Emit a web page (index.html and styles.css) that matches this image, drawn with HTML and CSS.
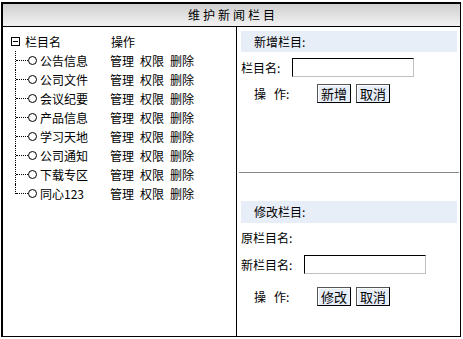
FILE: index.html
```html
<!DOCTYPE html>
<html lang="zh-CN">

<head>
    <meta charset="UTF-8">
    <meta name="viewport" content="width=device-width, initial-scale=1.0">
    <title>维护新闻栏目</title>
    <link rel="stylesheet" href="styles.css">
</head>

<body>
    <div class="frame">
        <div class="title">维护新闻栏目</div>
        <div class="main">
            <div class="tree">
                <div class="tree-head">
                    <span class="fold"></span>
                    <span class="head-name">栏目名</span>
                    <span class="ops">操作</span>
                </div>
                <ul class="nodes">
                    <li class="node"><span class="branch"></span><span class="dot"></span><span class="name">公告信息</span><span class="ops"><a>管理</a><a>权限</a><a>删除</a></span></li>
                    <li class="node"><span class="branch"></span><span class="dot"></span><span class="name">公司文件</span><span class="ops"><a>管理</a><a>权限</a><a>删除</a></span></li>
                    <li class="node"><span class="branch"></span><span class="dot"></span><span class="name">会议纪要</span><span class="ops"><a>管理</a><a>权限</a><a>删除</a></span></li>
                    <li class="node"><span class="branch"></span><span class="dot"></span><span class="name">产品信息</span><span class="ops"><a>管理</a><a>权限</a><a>删除</a></span></li>
                    <li class="node"><span class="branch"></span><span class="dot"></span><span class="name">学习天地</span><span class="ops"><a>管理</a><a>权限</a><a>删除</a></span></li>
                    <li class="node"><span class="branch"></span><span class="dot"></span><span class="name">公司通知</span><span class="ops"><a>管理</a><a>权限</a><a>删除</a></span></li>
                    <li class="node"><span class="branch"></span><span class="dot"></span><span class="name">下载专区</span><span class="ops"><a>管理</a><a>权限</a><a>删除</a></span></li>
                    <li class="node"><span class="branch last"></span><span class="dot"></span><span class="name">同心123</span><span class="ops"><a>管理</a><a>权限</a><a>删除</a></span></li>
                </ul>
            </div>

            <div class="forms">
                <div class="box box-add">
                    <div class="strip">新增栏目:</div>
                    <div class="row row-name">
                        <label>栏目名:</label>
                        <input type="text" class="field field-short">
                    </div>
                    <div class="row row-act">
                        <span class="act-label">操&nbsp;&nbsp;&nbsp;作:</span>
                        <button class="btn">新增</button>
                        <button class="btn">取消</button>
                    </div>
                </div>

                <hr class="split">

                <div class="box box-edit">
                    <div class="strip">修改栏目:</div>
                    <div class="row row-old">原栏目名:</div>
                    <div class="row row-new">
                        <label>新栏目名:</label>
                        <input type="text" class="field">
                    </div>
                    <div class="row row-act">
                        <span class="act-label">操&nbsp;&nbsp;&nbsp;作:</span>
                        <button class="btn">修改</button>
                        <button class="btn">取消</button>
                    </div>
                </div>
            </div>
        </div>
    </div>
</body>

</html>
```

FILE: styles.css
```css
body {
    margin: 0;
    font-family: "Noto Sans CJK SC", "DejaVu Sans", sans-serif;
    font-size: 12px;
    color: #000;
}

.frame {
    box-sizing: border-box;
    width: 460px;
    height: 335px;
    margin: 2px 0 0 1px;
    border: 2px solid #000;
    border-right-width: 1px;
    border-bottom-width: 1px;
    display: flex;
    flex-direction: column;
}

.title {
    height: 22px;
    line-height: 22px;
    text-align: center;
    letter-spacing: 3px;
    padding-left: 3px;
    border-bottom: 1px solid #000;
    background: linear-gradient(#cfcfcf, #f2f2f2);
}

.main {
    flex: 1;
    display: flex;
}

/* 左侧栏目树 */
.tree {
    box-sizing: border-box;
    flex: none;
    width: 234px;
    border-right: 1px solid #000;
    padding: 5px 0 0 8px;
}

.tree-head,
.node {
    display: flex;
    align-items: center;
    height: 19px;
}

.fold {
    box-sizing: border-box;
    width: 9px;
    height: 9px;
    border: 1px solid #000;
    position: relative;
}

.fold::after {
    content: "";
    position: absolute;
    left: 1px;
    right: 1px;
    top: 3px;
    border-top: 1px solid #000;
}

.head-name {
    width: 86px;
    margin-left: 5px;
}

.nodes {
    list-style: none;
    margin: 0;
    padding: 0;
}

.branch {
    width: 12px;
    height: 19px;
    margin-left: 4px;
    border-left: 1px dotted #000;
    position: relative;
}

.branch.last {
    height: 10px;
    align-self: flex-start;
}

.branch::after {
    content: "";
    position: absolute;
    left: 0;
    right: 0;
    top: 9px;
    border-top: 1px dotted #000;
}

.dot {
    box-sizing: border-box;
    width: 9px;
    height: 9px;
    border: 1px solid #000;
    border-radius: 50%;
}

.name {
    width: 70px;
    margin-left: 3px;
}

.ops a {
    margin-right: 6px;
}

/* 右侧表单 */
.forms {
    flex: 1;
    padding: 4px 3px 0 4px;
}

.strip {
    height: 21px;
    line-height: 21px;
    padding-left: 13px;
    background: #e8eef8;
}

.row {
    display: flex;
    align-items: center;
}

.field {
    box-sizing: border-box;
    width: 122px;
    height: 19px;
    margin: 0 0 0 12px;
    padding: 0;
    border: 1px solid #000;
    border-right-color: #c0c0c0;
    border-bottom-color: #c0c0c0;
}

.box-add .row-name {
    margin-top: 6px;
    height: 19px;
}

.row-act {
    margin-top: 6px;
    height: 20px;
}

.act-label {
    width: 63px;
    padding-left: 13px;
}

.btn {
    font: inherit;
    font-size: 13px;
    height: 19px;
    line-height: 15px;
    padding: 0 3px;
    margin-right: 5px;
    background: #e8eef8;
    border: 1px solid #000;
    border-top-color: #555;
    border-left-color: #555;
    box-shadow: inset 1px 1px 0 #fff;
}

.split {
    height: 0;
    margin: 69px -2px 0 -2px;
    border: none;
    border-top: 1px solid #888;
}

.box-edit {
    margin-top: 28px;
}

.box-edit .strip {
    height: 22px;
    line-height: 22px;
}

.row-old {
    margin-top: 5px;
    height: 19px;
}

.row-new {
    margin-top: 8px;
    height: 19px;
}

.box-edit .row-act {
    margin-top: 12px;
}
```
